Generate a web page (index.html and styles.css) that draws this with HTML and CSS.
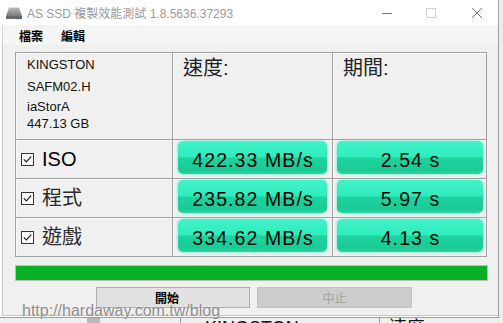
FILE: index.html
```html
<!DOCTYPE html>
<html lang="zh-Hant">
<head>
  <meta charset="UTF-8">
  <title>AS SSD 複製效能測試</title>
  <link rel="stylesheet" href="styles.css">
</head>
<body>

<div class="window">
  <div class="titlebar">
    <svg class="app-icon" width="16" height="12" viewBox="0 0 16 12">
      <defs>
        <linearGradient id="drive" x1="0" y1="0" x2="0" y2="1">
          <stop offset="0" stop-color="#bdbdbd"/>
          <stop offset="1" stop-color="#7c7c7c"/>
        </linearGradient>
      </defs>
      <path d="M4 0.5 H12 Q13 0.5 13.4 1.5 L16 9 H0 L2.6 1.5 Q3 0.5 4 0.5 Z" fill="url(#drive)"/>
      <rect x="0" y="9" width="16" height="3" fill="#6a6a6a"/>
      <rect x="9" y="10.5" width="6" height="1.2" fill="#3a5ad8"/>
    </svg>
    <span class="title">AS SSD 複製效能測試 1.8.5636.37293</span>
    <div class="controls">
      <svg class="ctl ctl-min" width="10" height="10" viewBox="0 0 10 10"><path d="M0 5.5 H10" stroke="#777" stroke-width="1"/></svg>
      <svg class="ctl ctl-max" width="10" height="10" viewBox="0 0 10 10"><rect x="0.5" y="0.5" width="9" height="9" fill="none" stroke="#d2d2d2"/></svg>
      <svg class="ctl ctl-close" width="10" height="10" viewBox="0 0 10 10"><path d="M0 0 L10 10 M10 0 L0 10" stroke="#777" stroke-width="1"/></svg>
    </div>
  </div>

  <div class="menubar">
    <span>檔案</span>
    <span>編輯</span>
  </div>

  <div class="client">
    <div class="results">
      <div class="cell info">
        <div class="info-line first">KINGSTON</div>
        <div class="info-line second">SAFM02.H</div>
        <div class="info-line">iaStorA</div>
        <div class="info-line">447.13 GB</div>
      </div>
      <div class="cell head">速度:</div>
      <div class="cell head">期間:</div>

      <div class="cell label">
        <svg class="check" width="13" height="13" viewBox="0 0 13 13"><rect x="0.5" y="0.5" width="12" height="12" fill="#fff" stroke="#333"/><path d="M2.8 6.4 L5.3 8.9 L10.2 3.6" fill="none" stroke="#222" stroke-width="1.3"/></svg>
        <span class="latin">ISO</span>
      </div>
      <div class="cell value"><div class="bar speed">422.33 MB/s</div></div>
      <div class="cell value time"><div class="bar duration">2.54 s</div></div>

      <div class="cell label">
        <svg class="check" width="13" height="13" viewBox="0 0 13 13"><rect x="0.5" y="0.5" width="12" height="12" fill="#fff" stroke="#333"/><path d="M2.8 6.4 L5.3 8.9 L10.2 3.6" fill="none" stroke="#222" stroke-width="1.3"/></svg>
        <span>程式</span>
      </div>
      <div class="cell value"><div class="bar speed">235.82 MB/s</div></div>
      <div class="cell value time"><div class="bar duration">5.97 s</div></div>

      <div class="cell label">
        <svg class="check" width="13" height="13" viewBox="0 0 13 13"><rect x="0.5" y="0.5" width="12" height="12" fill="#fff" stroke="#333"/><path d="M2.8 6.4 L5.3 8.9 L10.2 3.6" fill="none" stroke="#222" stroke-width="1.3"/></svg>
        <span>遊戲</span>
      </div>
      <div class="cell value"><div class="bar speed">334.62 MB/s</div></div>
      <div class="cell value time"><div class="bar duration">4.13 s</div></div>
    </div>

    <div class="progress"></div>

    <div class="buttons">
      <button class="btn start" type="button">開始</button>
      <button class="btn stop" type="button" disabled>中止</button>
    </div>
  </div>
</div>

<div class="behind">
  <div class="behind-block"></div>
  <div class="behind-line first"></div>
  <div class="behind-text">KINGSTON</div>
  <div class="behind-line second"></div>
  <div class="behind-text cjk">速度</div>
</div>

<div class="watermark">http://hardaway.com.tw/blog</div>

</body>
</html>
```

FILE: styles.css
```css
body {
  margin: 0;
  width: 503px;
  height: 323px;
  overflow: hidden;
  position: relative;
  background-color: #ececec;
  font-family: "Liberation Sans", "Noto Sans CJK TC", sans-serif;
  color: #000;
}

.window {
  width: 499px;
  height: 318px;
  box-sizing: border-box;
  background-color: #fbfbfb;
  border-right: 1px solid #9e9e9e;
  border-bottom: 1px solid #9e9e9e;
  display: flex;
  flex-direction: column;
}

/* title bar */
.titlebar {
  height: 25px;
  flex-shrink: 0;
  display: flex;
  align-items: center;
  padding-left: 6px;
  background-color: #fff;
}
.title {
  margin-left: 5px;
  font-size: 12px;
  color: #9a9a9a;
  white-space: nowrap;
}
.controls {
  margin-left: auto;
  display: flex;
  align-items: center;
  padding-right: 16px;
}
.ctl-min {
  margin-right: 34px;
}
.ctl-max {
  margin-right: 36px;
}

/* menu */
.menubar {
  height: 20px;
  flex-shrink: 0;
  box-sizing: border-box;
  margin-left: 2px;
  border-left: 1px solid #d4d4d4;
  background-color: #f5f5f5;
  display: flex;
  gap: 18px;
  padding: 5px 0 0 16px;
  font-size: 12px;
  line-height: 15px;
  font-weight: bold;
}

/* client area */
.client {
  height: 271px;
  box-sizing: border-box;
  margin-left: 2px;
  border-left: 1px solid #c9c9c9;
  border-bottom: 1px solid #c9c9c9;
  background-color: #f0f0f0;
  padding: 7px 0 0 12px;
}

.results {
  display: grid;
  grid-template-columns: 157px 160px 154px;
  grid-template-rows: 87px 39px 39px 39px;
  width: 472px;
  box-sizing: border-box;
  border-top: 1px solid #a0a0a0;
  border-left: 1px solid #a0a0a0;
}
.cell {
  box-sizing: border-box;
  border-right: 1px solid #a0a0a0;
  border-bottom: 1px solid #a0a0a0;
  box-shadow: inset 1px 1px 0 #fafafa;
}

.info {
  padding: 3px 0 0 11px;
  font-size: 13px;
  line-height: 17px;
  color: #111;
}
.info-line.first {
  margin-bottom: 5px;
}
.info-line.second {
  margin-bottom: 3px;
}

.head {
  padding: 3px 0 0 10px;
  font-size: 20px;
  line-height: 24px;
  color: #222;
}

.label {
  display: flex;
  align-items: center;
  padding-left: 5px;
  font-size: 20px;
  line-height: 24px;
  color: #2a2a2a;
}
.label .check {
  margin-right: 8px;
  flex-shrink: 0;
}
.label .latin {
  color: #000;
}

.value {
  padding: 1px 0 0 5px;
}
.value.time {
  padding-left: 4px;
}
.bar {
  height: 33px;
  box-sizing: border-box;
  padding: 5px 0 0 1.1px;
  border-radius: 5px;
  background: linear-gradient(#42f3c8 0%, #2fecbd 48%, #1ed29f 52%, #1bcb96 88%, #27d6a4 100%);
  box-shadow: 0 0 2px 1px rgba(60, 235, 190, 0.45);
  text-align: center;
  font-size: 19.5px;
  line-height: 28px;
  letter-spacing: 1.1px;
  color: #050505;
  white-space: nowrap;
}
.bar.speed {
  width: 149px;
}
.bar.duration {
  width: 146px;
}

.progress {
  margin-top: 8px;
  width: 473px;
  height: 16px;
  box-sizing: border-box;
  border: 1px solid #bcbcbc;
  background-color: #06b025;
}

.buttons {
  display: flex;
  margin-top: 6px;
  padding-left: 81px;
}
.btn {
  height: 21px;
  box-sizing: border-box;
  margin: 0;
  padding: 0;
  font-family: "Noto Sans CJK TC", sans-serif;
  font-size: 12px;
  line-height: 19px;
}
.btn.start {
  width: 154px;
  padding-right: 12px;
  background-color: #e1e1e1;
  border: 1px solid #adadad;
  color: #000;
  font-weight: bold;
}
.btn.stop {
  width: 155px;
  margin-left: 7px;
  background-color: #cccccc;
  border: 1px solid #c2c2c2;
  color: #a3a3a3;
}

/* window underneath */
.behind {
  height: 5px;
  display: flex;
  overflow: hidden;
  background-color: #efefef;
}
.behind-block {
  width: 13px;
  margin-left: 87px;
  background-color: #b8b8b8;
}
.behind-line {
  width: 1px;
  background-color: #9a9a9a;
}
.behind-line.first {
  margin-left: 80px;
}
.behind-line.second {
  margin-left: 80px;
}
.behind-text {
  margin-left: 24px;
  padding-top: 1px;
  font-size: 18px;
  line-height: 18px;
  color: #111;
}
.behind-text.cjk {
  margin-left: 9px;
}

.watermark {
  position: absolute;
  left: 22px;
  top: 302px;
  font-size: 16px;
  color: #8c8c8c;
  text-shadow: 0 0 1px #fff;
  white-space: nowrap;
}
```
